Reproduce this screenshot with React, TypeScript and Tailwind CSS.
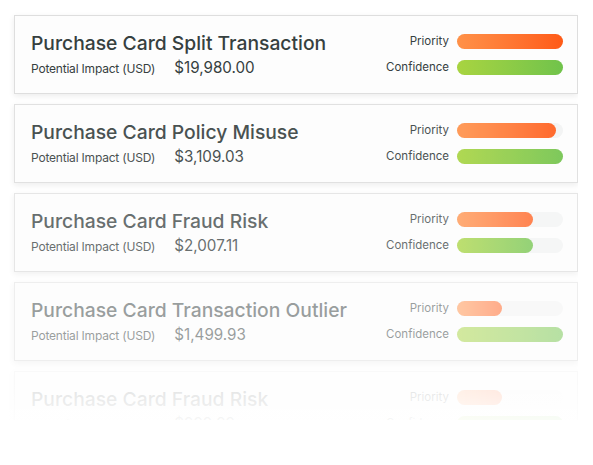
import React from "react";

type Row = { title: string; amount: string; p: number; c: number; o: string };

const rows: Row[] = [
  { title: "Purchase Card Split Transaction", amount: "$19,980.00", p: 100, c: 100, o: "opacity-100" },
  { title: "Purchase Card Policy Misuse", amount: "$3,109.03", p: 93, c: 100, o: "opacity-90" },
  { title: "Purchase Card Fraud Risk", amount: "$2,007.11", p: 72, c: 72, o: "opacity-75" },
  { title: "Purchase Card Transaction Outlier", amount: "$1,499.93", p: 42, c: 100, o: "opacity-50" },
  { title: "Purchase Card Fraud Risk", amount: "$999.99", p: 42, c: 100, o: "opacity-[0.15]" },
];

function Bar({ pct, kind }: { pct: number; kind: "p" | "c" }) {
  return (
    <div className="relative h-[15px] w-[106px] rounded-full bg-[#f2f3f3]">
      <div
        className={
          kind === "p"
            ? "h-full rounded-full bg-gradient-to-r from-[#ff9148] to-[#ff5a16]"
            : "h-full rounded-full bg-gradient-to-r from-[#a8d440] to-[#70c34b]"
        }
        style={{ width: `${pct}%` }}
      />
    </div>
  );
}

export default function App() {
  return (
    <div className="w-[593px] h-[465px] bg-white" style={{ fontFamily: "Inter, 'Noto Sans', sans-serif" }}>
      <div className="relative pt-[15px] pl-[14px] w-[578px] h-[420px] overflow-hidden">
        <div className="flex flex-col gap-[10px]">
          {rows.map((r, i) => (
            <div
              key={i}
              className={`${r.o} h-[79px] w-[564px] shrink-0 bg-[#fdfdfd] border border-[#dedede] shadow-[0_2px_6px_rgba(0,0,0,0.08)] flex justify-between pl-[16px] pr-[14px]`}
            >
              <div className="flex flex-col pt-[13px]">
                <div className="text-[19.3px] leading-[28px] font-medium text-[#36403f]">{r.title}</div>
                <div className="flex items-baseline gap-[19px]">
                  <span className="text-[12px] tracking-[-0.2px] text-[#36403f]">Potential Impact (USD)</span>
                  <span className="text-[15.2px] text-[#36403f]">{r.amount}</span>
                </div>
              </div>
              <div className="flex flex-col pt-[17px] gap-[10px]">
                <div className="flex items-center justify-end gap-[8px] h-[16px]">
                  <span className="text-[11.5px] leading-[16px] text-[#36403f]">Priority</span>
                  <Bar pct={r.p} kind="p" />
                </div>
                <div className="flex items-center justify-end gap-[8px] h-[16px]">
                  <span className="text-[11.5px] leading-[16px] text-[#36403f]">Confidence</span>
                  <Bar pct={r.c} kind="c" />
                </div>
              </div>
            </div>
          ))}
        </div>
        <div className="absolute left-0 right-0 bottom-0 h-[40px] bg-gradient-to-b from-white/0 to-white/70" />
      </div>
    </div>
  );
}
